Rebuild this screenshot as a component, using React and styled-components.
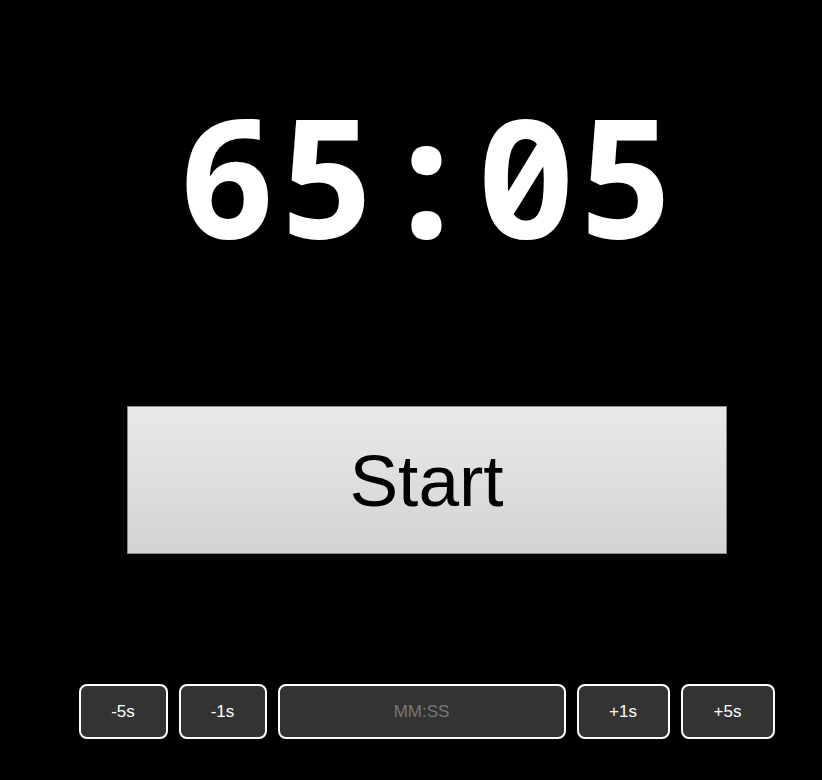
import React, { useState } from 'react';
import styled, { createGlobalStyle } from 'styled-components';

const GlobalStyle = createGlobalStyle`
  html, body {
    margin: 0;
    padding: 0;
    background: #000;
  }
  body {
    font-family: "Liberation Sans", Arial, sans-serif;
  }
`;

const Page = styled.div`
  min-height: 780px;
  background: #000;
  padding-left: 31px;
  display: flex;
  flex-direction: column;
  align-items: center;
`;

const Clock = styled.div`
  margin-top: 91px;
  font-family: "Noto Sans Mono", "DejaVu Sans Mono", monospace;
  font-weight: bold;
  font-size: 166px;
  line-height: 1;
  color: #fff;
`;

const StartButton = styled.button`
  margin-top: 149px;
  width: 600px;
  height: 148px;
  border: 1px solid #8a8a8a;
  background: linear-gradient(#e9e9e9, #d3d3d3);
  font-family: "Liberation Sans", Arial, sans-serif;
  font-size: 73px;
  color: #000;
  cursor: pointer;
`;

const Controls = styled.div`
  margin-top: 130px;
  display: flex;
  gap: 11px;
`;

const Step = styled.button`
  width: ${(p) => p.$w}px;
  height: 55px;
  border: 2px solid #fff;
  border-radius: 8px;
  background: #333;
  color: #fff;
  font-family: "Liberation Sans", Arial, sans-serif;
  font-size: 17px;
  cursor: pointer;
`;

const TimeInput = styled.input`
  box-sizing: border-box;
  width: 288px;
  height: 55px;
  border: 2px solid #fff;
  border-radius: 8px;
  background: #333;
  color: #fff;
  text-align: center;
  font-family: "Liberation Sans", Arial, sans-serif;
  font-size: 17px;
  outline: none;

  &::placeholder {
    color: #777;
  }
`;

const pad = (n) => String(n).padStart(2, '0');

export default function App() {
  const [seconds, setSeconds] = useState(65 * 60 + 5);
  const bump = (d) => setSeconds((s) => Math.max(0, s + d));

  return (
    <>
      <GlobalStyle />
      <Page>
        <Clock>
          {pad(Math.floor(seconds / 60))}:{pad(seconds % 60)}
        </Clock>
        <StartButton>Start</StartButton>
        <Controls>
          <Step $w={89} onClick={() => bump(-5)}>-5s</Step>
          <Step $w={88} onClick={() => bump(-1)}>-1s</Step>
          <TimeInput placeholder="MM:SS" />
          <Step $w={93} onClick={() => bump(1)}>+1s</Step>
          <Step $w={94} onClick={() => bump(5)}>+5s</Step>
        </Controls>
      </Page>
    </>
  );
}
